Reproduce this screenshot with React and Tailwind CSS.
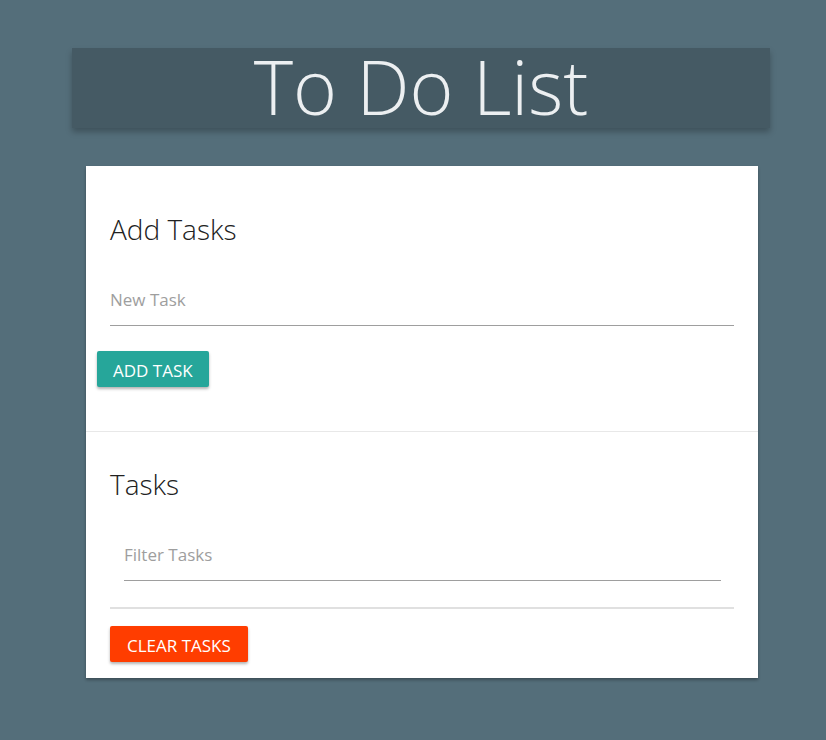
import React from 'react';

const font = { fontFamily: '"Open Sans", "Noto Sans", sans-serif' };

export default function App() {
    return (
        <div className="min-h-[740px] bg-[#546e7a] pt-[48px] pb-[62px]" style={font}>
            <div className="w-[698px] ml-[72px]">
                {/* Header */}
                <div className="h-[80px] bg-[#455a64] shadow-[0_4px_6px_rgba(0,0,0,0.25)] flex items-center justify-center">
                    <h1 className="text-[75px] font-light text-[#eceff1] leading-none -mt-[4px]">To Do List</h1>
                </div>

                {/* Card */}
                <div className="mt-[38px] ml-[14px] w-[672px] bg-white shadow-[0_2px_3px_rgba(0,0,0,0.3)]">
                    <div className="px-[24px] pt-[45px] pb-[44px]">
                        <h2 className="text-[28px] font-light text-[#212121] leading-[36px]">Add Tasks</h2>
                        <div className="mt-[31px]">
                            <input
                                type="text"
                                placeholder="New Task"
                                className="w-full h-[48px] pb-[5px] border-b border-[#9e9e9e] text-[17px] outline-none placeholder:text-[#9e9e9e] bg-transparent"
                            />
                        </div>
                        <button className="mt-[25px] -ml-[13px] h-[36px] px-[16px] pt-[3px] bg-[#26a69a] text-white text-[17px] uppercase rounded-[2px] shadow-[0_2px_3px_rgba(0,0,0,0.3)]">
                            Add Task
                        </button>
                    </div>
                    <div className="border-t border-[#e8e8e8] px-[24px] pt-[34px] pb-[16px]">
                        <h2 className="text-[28px] font-light text-[#212121] leading-[36px]">Tasks</h2>
                        <div className="mt-[31px] px-[14px]">
                            <input
                                type="text"
                                placeholder="Filter Tasks"
                                className="w-[597px] h-[48px] pb-[5px] border-b border-[#9e9e9e] text-[17px] outline-none placeholder:text-[#9e9e9e] bg-transparent"
                            />
                        </div>
                        <div className="mt-[26px] border-t-2 border-[#e0e0e0]"></div>
                        <button className="mt-[17px] h-[36px] px-[17px] pt-[3px] bg-[#ff3d00] text-white text-[17px] uppercase rounded-[2px] shadow-[0_2px_3px_rgba(0,0,0,0.3)]">
                            Clear Tasks
                        </button>
                    </div>
                </div>
            </div>
        </div>
    );
}
